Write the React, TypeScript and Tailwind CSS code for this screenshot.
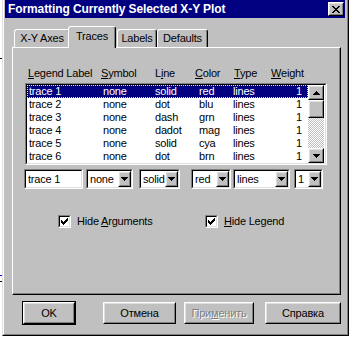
import React from 'react';

const rows = [
  ['trace 1', 'none', 'solid', 'red', 'lines', '1'],
  ['trace 2', 'none', 'dot', 'blu', 'lines', '1'],
  ['trace 3', 'none', 'dash', 'grn', 'lines', '1'],
  ['trace 4', 'none', 'dadot', 'mag', 'lines', '1'],
  ['trace 5', 'none', 'solid', 'cya', 'lines', '1'],
  ['trace 6', 'none', 'dot', 'brn', 'lines', '1'],
];

const DownArrow = () => (
  <svg width="7" height="4" viewBox="0 0 7 4" shapeRendering="crispEdges">
    <path d="M0 0h7v1h-1v1h-1v1h-1v1h-1v-1h-1v-1h-1v-1h-1z" fill="#000" />
  </svg>
);

const UpArrow = () => (
  <svg width="7" height="4" viewBox="0 0 7 4" shapeRendering="crispEdges">
    <path d="M3 0h1v1h1v1h1v1h1v1h-7v-1h1v-1h1v-1h1z" fill="#000" />
  </svg>
);

const CheckMark = () => (
  <svg width="7" height="7" viewBox="0 0 7 7" shapeRendering="crispEdges">
    <path d="M6 0h1v3h-1v1h-1v1h-1v1h-1v1h-1v-1h-1v-1h-1v-3h1v1h1v1h1v-1h1v-1h1z" fill="#000" />
  </svg>
);

function Raised({ className = '', children }: { className?: string; children?: React.ReactNode }) {
  return (
    <div className={`border border-t-white border-l-white border-r-black border-b-black ${className}`}>
      <div className="h-full w-full border border-t-[#dfdfdf] border-l-[#dfdfdf] border-r-[#808080] border-b-[#808080] bg-[#c0c0c0] flex items-center justify-center">
        {children}
      </div>
    </div>
  );
}

function Sunken({ className = '', innerClassName = '', children }: { className?: string; innerClassName?: string; children?: React.ReactNode }) {
  return (
    <div className={`border border-t-[#808080] border-l-[#808080] border-r-white border-b-white ${className}`}>
      <div className={`h-full w-full border border-t-black border-l-black border-r-[#dfdfdf] border-b-[#dfdfdf] bg-white ${innerClassName}`}>
        {children}
      </div>
    </div>
  );
}

function Combo({ value, className }: { value: string; className: string }) {
  return (
    <Sunken className={`h-[20px] ${className}`} innerClassName="flex items-center">
      <span className="flex-1 pl-[2px] leading-[16px]">{value}</span>
      <Raised className="w-[13px] h-[16px]">
        <DownArrow />
      </Raised>
    </Sunken>
  );
}

function Tab({ label, selected, className = '' }: { label: string; selected?: boolean; className?: string }) {
  if (selected) {
    return (
      <div className={`relative z-10 -mb-px h-[22px] rounded-t-[3px] border-t border-l border-r border-t-white border-l-white border-r-black bg-[#c0c0c0] shadow-[inset_-1px_0_0_#808080] flex items-center justify-center pb-[2px] ${className}`}>
        {label}
      </div>
    );
  }
  return (
    <div className={`h-[18px] rounded-t-[3px] border-t border-l border-r border-t-white border-l-white border-r-black bg-[#c0c0c0] shadow-[inset_-1px_0_0_#808080] flex items-center justify-center ${className}`}>
      {label}
    </div>
  );
}

function CheckRow({ label, className = '' }: { label: React.ReactNode; className?: string }) {
  return (
    <div className={`flex items-center ${className}`}>
      <Sunken className="w-[13px] h-[13px]" innerClassName="flex items-center justify-center">
        <CheckMark />
      </Sunken>
      <span className="ml-[6px]">{label}</span>
    </div>
  );
}

export default function App() {
  return (
    <div className="relative w-[351px] h-[337px] bg-white overflow-hidden font-['Liberation_Sans',Arial,sans-serif] text-[11px] leading-[13px] tracking-[-0.2px] text-black">
      {/* bits of the window behind */}
      <div className="absolute left-0 top-[58px] w-[2px] h-px bg-black" />
      <div className="absolute left-0 top-[275px] w-[2px] h-px bg-[#0000ff]" />
      <div className="absolute left-0 top-[281px] w-[2px] h-px bg-black" />

      <div className="ml-[2px] w-[347px] h-[336px] border-l border-r border-b border-l-[#dfdfdf] border-r-black border-b-black">
        <div className="h-full flex flex-col border-l border-r border-b border-l-white border-r-[#808080] border-b-[#808080] bg-[#c0c0c0] pl-px pr-[2px] pb-[2px]">
          {/* title bar */}
          <div className="h-[18px] bg-[#000080] flex items-center justify-between pl-[3px] pr-px">
            <span className="text-white font-bold text-[12px] leading-[14px] tracking-[-0.1px]">Formatting Currently Selected X-Y Plot</span>
            <Raised className="w-[16px] h-[14px]">
              <svg width="8" height="7" viewBox="0 0 8 7" shapeRendering="crispEdges">
                <path d="M0 0h2v1h1v1h2v-1h1v-1h2v1h-1v1h-1v1h-1v1h1v1h1v1h1v1h-2v-1h-1v-1h-2v1h-1v1h-2v-1h1v-1h1v-1h1v-1h-1v-1h-1v-1h-1z" fill="#000" />
              </svg>
            </Raised>
          </div>

          {/* tabs + page */}
          <div className="ml-[7px] w-[329px] mt-[8px]">
            <div className="flex items-end h-[21px] pl-[2px]">
              <Tab label="X-Y Axes" className="w-[56px]" />
              <Tab label="Traces" selected className="w-[48px] -ml-[2px]" />
              <Tab label="Labels" className="w-[40px] ml-px" />
              <Tab label="Defaults" className="w-[51px]" />
            </div>
            <div className="h-[248px] border border-t-white border-l-white border-r-black border-b-black shadow-[inset_-1px_-1px_0_#808080] flex flex-col">
              {/* column headings */}
              <div className="flex mt-[19px] ml-[15px]">
                <span className="w-[73px]"><u>L</u>egend Label</span>
                <span className="w-[54px]"><u>S</u>ymbol</span>
                <span className="w-[40px]">L<u>i</u>ne</span>
                <span className="w-[39px]"><u>C</u>olor</span>
                <span className="w-[37px]"><u>T</u>ype</span>
                <span><u>W</u>eight</span>
              </div>

              {/* trace list */}
              <Sunken className="ml-[12px] mt-[3px] w-[302px] h-[82px]" innerClassName="flex">
                <div className="w-[281px] flex flex-col">
                  {rows.map((r, i) => (
                    <div
                      key={r[0]}
                      className={`flex h-[13px] items-center pl-[2px] pr-[6px] ${i === 0 ? 'bg-[#000080] text-white outline outline-1 outline-dotted outline-[#ffff00] -outline-offset-1' : ''}`}
                    >
                      <span className="w-[74px]">{r[0]}</span>
                      <span className="w-[52px]">{r[1]}</span>
                      <span className="w-[44px]">{r[2]}</span>
                      <span className="w-[34px]">{r[3]}</span>
                      <span className="w-[34px]">{r[4]}</span>
                      <span className="flex-1 text-right">{r[5]}</span>
                    </div>
                  ))}
                </div>
                <div className="w-[16px] flex flex-col">
                  <Raised className="h-[15px]">
                    <UpArrow />
                  </Raised>
                  <Raised className="h-[18px]" />
                  <div className="flex-1 bg-[repeating-conic-gradient(#c0c0c0_0%_25%,#ffffff_0%_50%)] bg-[length:2px_2px]" />
                  <Raised className="h-[15px]">
                    <DownArrow />
                  </Raised>
                </div>
              </Sunken>

              {/* edit row */}
              <div className="flex mt-[4px] ml-[11px]">
                <Sunken className="w-[59px] h-[20px]" innerClassName="flex items-center pl-[2px]">
                  trace 1
                </Sunken>
                <Combo value="none" className="w-[47px] ml-[3px]" />
                <Combo value="solid" className="w-[41px] ml-[6px]" />
                <Combo value="red" className="w-[40px] ml-[11px]" />
                <Combo value="lines" className="w-[57px] ml-[2px]" />
                <Combo value="1" className="w-[29px] ml-[4px]" />
              </div>

              {/* check boxes */}
              <div className="flex mt-[26px] ml-[45px]">
                <CheckRow className="w-[147px]" label={<>Hide <u>A</u>rguments</>} />
                <CheckRow label={<><u>H</u>ide Legend</>} />
              </div>
            </div>
          </div>

          {/* dialog buttons */}
          <div className="flex items-center mt-[6px]">
            <div className="ml-[17px] border border-black">
              <Raised className="w-[52px] h-[22px]">OK</Raised>
            </div>
            <Raised className="w-[73px] h-[22px] ml-[27px]">Отмена</Raised>
            <Raised className="w-[70px] h-[22px] ml-[8px]">
              <span className="text-[#808080] [text-shadow:1px_1px_0_#ffffff]">При<u>м</u>енить</span>
            </Raised>
            <Raised className="w-[76px] h-[22px] ml-[11px]">Справка</Raised>
          </div>
        </div>
      </div>
    </div>
  );
}
